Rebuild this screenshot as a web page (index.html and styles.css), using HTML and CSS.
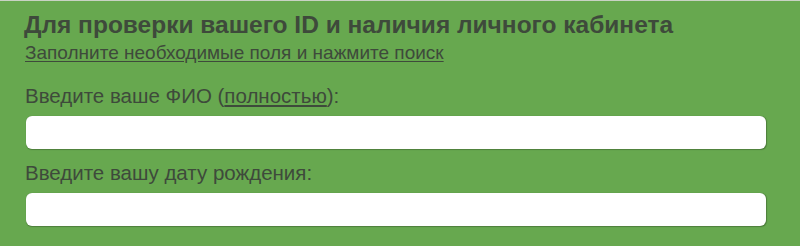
FILE: index.html
```html
<!DOCTYPE html>
<html lang="ru">
<head>
<meta charset="utf-8">
<link rel="stylesheet" href="styles.css">
</head>
<body>
<div class="panel">
  <h1 class="title">Для проверки вашего ID и наличия личного кабинета</h1>
  <a class="hint" href="#">Заполните необходимые поля и нажмите поиск</a>
  <form class="form">
    <label class="label">Введите ваше ФИО (<u>полностью</u>):</label>
    <input class="field" type="text">
    <label class="label">Введите вашу дату рождения:</label>
    <input class="field" type="text">
  </form>
</div>
</body>
</html>
```
FILE: styles.css
```css
html, body {
  margin: 0;
  padding: 0;
  background: #67a84f;
}
.panel {
  height: 246px;
  box-sizing: border-box;
  border-top: 1px solid #c9d2c4;
  background: #67a84f;
  padding: 10px 34px 0 25px;
  font-family: "Liberation Sans", Arial, sans-serif;
  color: #3e4a3b;
  display: flex;
  flex-direction: column;
}
.title {
  margin: 0 0 0 -1px;
  font-size: 24.5px;
  font-weight: bold;
  line-height: 28px;
  white-space: nowrap;
}
.hint {
  display: block;
  margin-top: 3px;
  color: #3e4a3b;
  font-size: 19px;
  line-height: 22px;
  text-decoration: underline;
  text-underline-offset: 2px;
  white-space: nowrap;
  align-self: flex-start;
}
.form {
  display: flex;
  flex-direction: column;
  margin-top: 20px;
}
.label {
  font-size: 20.5px;
  line-height: 24px;
  display: block;
  white-space: nowrap;
}
.field {
  display: block;
  margin: 8px 0 12px 1px;
  height: 33px;
  box-sizing: border-box;
  border: none;
  border-radius: 6px;
  background: #fff;
  box-shadow: 0.5px 0.5px 1px rgba(0,0,0,0.25);
}
```
